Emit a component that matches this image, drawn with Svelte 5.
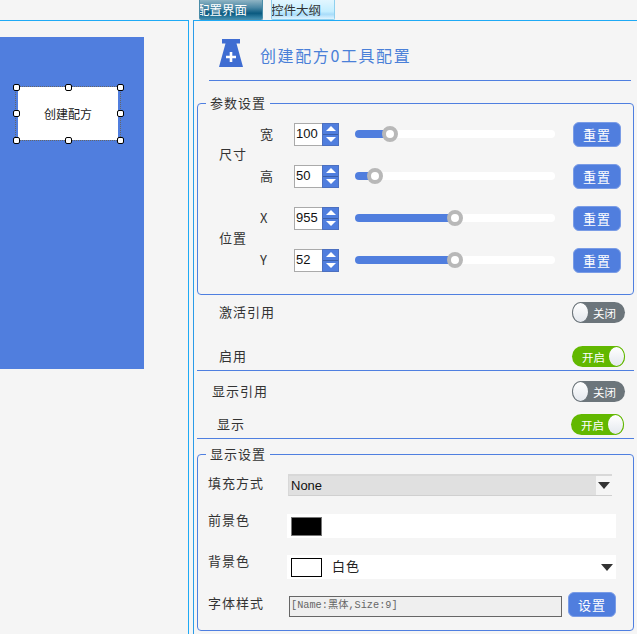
<script>
  const sizeRows = [
    { label: '宽', value: 100, percent: 17.5 },
    { label: '高', value: 50, percent: 10 }
  ];
  const posRows = [
    { label: 'X', value: 955, percent: 50 },
    { label: 'Y', value: 52, percent: 50 }
  ];
  const groups = [
    { name: '尺寸', rows: sizeRows },
    { name: '位置', rows: posRows }
  ];
  const handles = [
    [0, 0], [50, 0], [100, 0],
    [0, 50], [100, 50],
    [0, 100], [50, 100], [100, 100]
  ];
</script>

<div class="page">
  <div class="tabs">
    <div class="tab active">配置界面</div>
    <div class="tab">控件大纲</div>
  </div>

  <div class="main">
    <div class="left">
      <div class="canvas">
        <div class="widget">
          创建配方
          {#each handles as h}
            <span class="handle" style="left: {h[0]}%; top: {h[1]}%"></span>
          {/each}
        </div>
      </div>
    </div>

    <div class="right">
      <div class="header">
        <svg class="flask" width="24" height="28" viewBox="0 0 24 28">
          <path d="M3 0h18v4.500h-3.500L24 28H0L6.500 4.500H3z" fill="#3f6dd2"/>
          <path d="M10.700 13h2.600v3.700H17v2.600h-3.700V23h-2.600v-3.700H7v-2.600h3.700z" fill="#fff"/>
        </svg>
        <span class="title">创建配方0工具配置</span>
      </div>

      <fieldset class="params">
        <legend>参数设置</legend>
        {#each groups as group}
          <div class="group">
            <div class="group-name">{group.name}</div>
            <div class="group-rows">
              {#each group.rows as row}
                <div class="param-row">
                  <span class="param-label">{row.label}</span>
                  <div class="spinner">
                    <span class="spin-value">{row.value}</span>
                    <div class="spin-btns">
                      <span class="spin-btn"><i class="up"></i></span>
                      <span class="spin-btn"><i class="down"></i></span>
                    </div>
                  </div>
                  <div class="slider">
                    <div class="slider-fill" style="width: {row.percent}%"></div>
                    <span class="slider-knob" style="left: {row.percent}%"></span>
                  </div>
                  <button class="btn">重置</button>
                </div>
              {/each}
            </div>
          </div>
        {/each}
      </fieldset>

      <div class="switches first">
        <div class="switch-row tall">
          <span>激活引用</span>
          <div class="toggle off"><i></i><b>关闭</b></div>
        </div>
        <div class="switch-row">
          <span>启用</span>
          <div class="toggle on"><b>开启</b><i></i></div>
        </div>
      </div>

      <div class="switches second">
        <div class="switch-row">
          <span>显示引用</span>
          <div class="toggle off"><i></i><b>关闭</b></div>
        </div>
        <div class="switch-row shift">
          <span>显示</span>
          <div class="toggle on"><b>开启</b><i></i></div>
        </div>
      </div>

      <fieldset class="display">
        <legend>显示设置</legend>
        <div class="form-row fill">
          <label>填充方式</label>
          <div class="combo">
            <span class="combo-value">None</span>
            <span class="combo-arrow"><i class="arrow"></i></span>
          </div>
        </div>
        <div class="form-row color">
          <label>前景色</label>
          <div class="color-box">
            <span class="swatch black"></span>
          </div>
        </div>
        <div class="form-row color">
          <label>背景色</label>
          <div class="color-box">
            <span class="swatch"></span>
            <span class="color-name">白色</span>
            <i class="arrow end"></i>
          </div>
        </div>
        <div class="form-row font">
          <label>字体样式</label>
          <div class="font-field">[Name:黑体,Size:9]</div>
          <button class="btn">设置</button>
        </div>
      </fieldset>
    </div>
  </div>
</div>

<style>
  :global(body) {
    margin: 0;
    background: #f5f5f5;
  }

  .page {
    width: 637px;
    height: 634px;
    overflow: hidden;
    font-family: "Noto Sans CJK SC", "Liberation Sans", sans-serif;
    font-size: 13px;
    color: #333;
    background: #f5f5f5;
  }

  .tabs {
    display: flex;
    gap: 8px;
    height: 20px;
    padding-left: 199px;
    box-sizing: border-box;
  }

  .tab {
    width: 64px;
    height: 20px;
    box-sizing: border-box;
    border: 1px solid #8fd0ee;
    border-top: none;
    border-radius: 0 0 2px 2px;
    background: linear-gradient(#e2f6ff, #c4eeff 60%, #a8dcfa 75%, #dff4ff);
    font-size: 12.500px;
    line-height: 19px;
    white-space: nowrap;
    overflow: hidden;
    text-indent: -1px;
  }

  .tab.active {
    color: #fff;
    border-color: #4a8ca8;
    text-indent: -3px;
    background: linear-gradient(#8fb4c4, #4a87a4 40%, #0a5a80 70%, #3f8cae);
  }

  .main {
    display: flex;
    gap: 4px;
    height: 614px;
  }

  .left {
    position: relative;
    width: 189px;
    flex: none;
    box-sizing: border-box;
    border-top: 1px solid #1eaaf5;
    border-right: 1px solid #1eaaf5;
    padding-top: 16px;
  }

  .canvas {
    position: relative;
    width: 144px;
    height: 332px;
    background: #507ede;
  }

  .widget {
    position: absolute;
    left: 16px;
    top: 50px;
    width: 104px;
    height: 53px;
    background: #fff;
    outline: 1px dotted #666;
    box-shadow: inset 2px 0 0 #507ede, inset -2px 0 0 #507ede;
    color: #222;
    font-size: 12px;
    display: flex;
    align-items: center;
    justify-content: center;
  }

  .handle {
    position: absolute;
    width: 7px;
    height: 7px;
    box-sizing: border-box;
    margin: -3.500px 0 0 -3.500px;
    background: #fff;
    border: 1px solid #000;
    border-radius: 2px;
  }

  .right {
    width: 444px;
    flex: none;
    box-sizing: border-box;
    border-top: 1px solid #1eaaf5;
    border-left: 1px solid #2a9be8;
    padding: 0 4px 0 3px;
  }

  .header {
    display: flex;
    align-items: center;
    height: 59px;
    margin: 0 2px 0 12px;
    padding-left: 10px;
    gap: 17px;
    border-bottom: 1px solid #4f7fe0;
  }

  .flask {
    flex: none;
    margin-top: 5px;
  }

  .title {
    margin-top: 9px;
    font-size: 16px;
    letter-spacing: 1.600px;
    color: #4a80d8;
  }

  fieldset {
    margin: 0;
    padding: 0;
    min-width: 0;
    border: 1px solid #4f7fe0;
    border-radius: 4px;
  }

  legend {
    margin-left: 8px;
    padding: 0 4px;
    font-size: 13px;
    line-height: 16px;
    letter-spacing: 1px;
    color: #333;
  }

  .params {
    margin-top: 14px;
    height: 200px;
    box-sizing: border-box;
    padding-top: 2px;
    width: 437px;
  }

  .group {
    display: flex;
    align-items: center;
  }

  .group-name {
    width: 62px;
    padding-left: 21px;
    padding-bottom: 4px;
    box-sizing: border-box;
    letter-spacing: 1px;
    flex: none;
  }

  .param-row {
    display: flex;
    align-items: center;
    height: 42px;
  }

  .param-label {
    width: 34px;
    font-size: 13px;
    padding-bottom: 2px;
    flex: none;
  }

  .spinner {
    display: flex;
    width: 45px;
    height: 23px;
    box-sizing: border-box;
    background: #fff;
    border: 1px solid #aaa;
    flex: none;
  }

  .spin-value {
    width: 27px;
    font-family: "Liberation Sans", sans-serif;
    font-size: 13px;
    line-height: 19px;
    padding-left: 1px;
    color: #111;
  }

  .spin-btns {
    display: flex;
    flex-direction: column;
    margin: -1px -1px -1px auto;
    width: 17px;
    gap: 1px;
    background: #3c5fa8;
    border: 1px solid #4c70c0;
    box-sizing: border-box;
  }

  .spin-btn {
    flex: 1;
    background: #507ede;
    display: flex;
    align-items: center;
    justify-content: center;
  }

  .spin-btn i {
    width: 0;
    height: 0;
    border-left: 5px solid transparent;
    border-right: 5px solid transparent;
  }

  .spin-btn .up {
    border-bottom: 5px solid #fff;
  }

  .spin-btn .down {
    border-top: 5px solid #fff;
  }

  .slider {
    position: relative;
    width: 200px;
    height: 8px;
    margin-left: 16px;
    margin-right: 1px;
    border-radius: 4px;
    background: #fff;
    flex: none;
  }

  .slider-fill {
    height: 100%;
    background: #507ede;
    border-radius: 4px 0 0 4px;
  }

  .slider-knob {
    position: absolute;
    top: 50%;
    width: 16px;
    height: 16px;
    box-sizing: border-box;
    margin: -8px 0 0 -8px;
    border: 4px solid #b8b8b8;
    border-radius: 50%;
    background: #fff;
  }

  .btn {
    width: 48px;
    height: 25px;
    padding: 0;
    margin-left: 17px;
    border: 1px solid #7a9ce6;
    border-radius: 6px;
    background: #507ede;
    color: #fff;
    font-family: inherit;
    font-size: 13px;
    letter-spacing: 1px;
    flex: none;
  }

  .switches {
    width: 437px;
    box-sizing: border-box;
    border-bottom: 1px solid #4f7fe0;
  }

  .first {
    height: 76px;
    padding-top: 7px;
  }

  .second {
    height: 68px;
    padding-top: 10px;
  }

  .switch-row {
    display: flex;
    align-items: center;
    justify-content: space-between;
    height: 21px;
    padding-left: 22px;
    padding-right: 9px;
    letter-spacing: 1px;
  }

  .switch-row > span {
    padding-bottom: 3px;
  }

  .first .switch-row.tall {
    margin-bottom: 23px;
  }

  .second .switch-row {
    padding-left: 15px;
  }

  .second .switch-row.shift {
    margin-top: 12px;
    padding-left: 20px;
    padding-right: 10px;
  }

  .toggle {
    display: flex;
    align-items: center;
    justify-content: space-between;
    width: 53px;
    height: 21px;
    box-sizing: border-box;
    border-radius: 11px;
    color: #fff;
    font-size: 11.500px;
    letter-spacing: 0;
  }

  .toggle.off {
    background: #6c757b;
    padding-right: 9px;
  }

  .toggle.on {
    background: #62b800;
    padding-left: 10px;
  }

  .toggle b {
    font-weight: 400;
  }

  .toggle i {
    width: 17px;
    height: 21px;
    box-sizing: border-box;
    border-radius: 50%;
    background: linear-gradient(#fff, #e4e8ee);
    border: 1px solid #6c757b;
  }

  .toggle.on i {
    border-color: #62b800;
  }

  .display {
    margin-top: 7px;
    width: 437px;
    height: 185px;
    box-sizing: border-box;
    padding: 11px 16px 0 10px;
  }

  .display legend {
    margin-left: -2px;
  }

  .form-row {
    display: flex;
    align-items: center;
  }

  .form-row label {
    width: 80px;
    flex: none;
    letter-spacing: 1px;
  }

  .fill {
    height: 24px;
    margin-bottom: 17px;
  }

  .fill label {
    padding-bottom: 5px;
  }

  .combo {
    display: flex;
    width: 324px;
    height: 22px;
    box-sizing: border-box;
    border-top: 2px solid #d8d8d8;
    border-bottom: 1px solid #d0d0d0;
    border-left: 1px solid #d8d8d8;
    background: #e0e0e0;
    color: #111;
  }

  .combo-value {
    flex: 1;
    font-family: "Liberation Sans", sans-serif;
    font-size: 13px;
    padding-left: 2px;
    line-height: 19px;
  }

  .combo-arrow {
    width: 16px;
    background: #f5f5f5;
    display: flex;
    align-items: center;
    justify-content: center;
  }

  .arrow {
    width: 0;
    height: 0;
    border-left: 6.500px solid transparent;
    border-right: 6.500px solid transparent;
    border-top: 7px solid #333;
  }

  .arrow.end {
    margin-left: auto;
    margin-right: 3px;
  }

  .color {
    height: 24px;
    margin-bottom: 17px;
  }

  .color label {
    position: relative;
    bottom: 7px;
  }

  .color-box {
    display: flex;
    align-items: center;
    width: 329px;
    height: 24px;
    margin-left: -1px;
    padding-left: 4px;
    box-sizing: border-box;
    background: #fff;
    color: #222;
  }

  .swatch {
    width: 31px;
    height: 19px;
    box-sizing: border-box;
    border: 1px solid #000;
    background: #fff;
    flex: none;
  }

  .swatch.black {
    background: #000;
    border-color: #777;
  }

  .color-name {
    margin-left: 10px;
    padding-bottom: 4px;
    letter-spacing: 1px;
  }

  .font {
    height: 25px;
    margin-top: -4px;
  }

  .font label {
    padding-bottom: 4px;
  }

  .font-field {
    width: 273px;
    height: 21px;
    margin-left: 1px;
    margin-top: 4px;
    box-sizing: border-box;
    border: 1px solid #666;
    background: #efefef;
    color: #666;
    font-family: "Liberation Mono", "Noto Sans CJK SC", monospace;
    font-size: 10.250px;
    line-height: 17px;
    padding-left: 1px;
    white-space: nowrap;
  }

  .font .btn {
    margin-left: 6px;
  }
</style>
